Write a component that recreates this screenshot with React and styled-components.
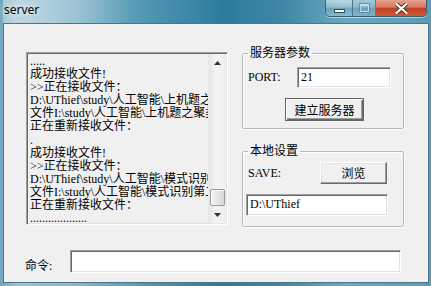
import React from "react";
import styled, { createGlobalStyle } from "styled-components";

const logLines = [
  ".....",
  "成功接收文件!",
  ">>正在接收文件：",
  "D:\\UThief\\study\\人工智能\\上机题之聚类分析.rar",
  "文件I:\\study\\人工智能\\上机题之聚类分析.rar",
  "正在重新接收文件：",
  ".",
  "成功接收文件!",
  ">>正在接收文件：",
  "D:\\UThief\\study\\人工智能\\模式识别第二次作业.doc",
  "文件I:\\study\\人工智能\\模式识别第二次作业.doc",
  "正在重新接收文件：",
  "...................",
];

export default function App() {
  return (
    <>
      <GlobalStyle />
      <Window>
        <TitleBar>
          <Title>server</Title>
          <Caption>
            <CapButton>
              <MinGlyph />
            </CapButton>
            <CapButton $disabled>
              <MaxGlyph />
            </CapButton>
            <CloseButton>
              <svg width="13" height="11" viewBox="0 0 13 11">
                <path
                  d="M1.5 1 L11.5 10 M11.5 1 L1.5 10"
                  stroke="#4a2a22"
                  strokeWidth="4"
                  strokeLinecap="square"
                />
                <path
                  d="M1.5 1 L11.5 10 M11.5 1 L1.5 10"
                  stroke="#ffffff"
                  strokeWidth="2.2"
                  strokeLinecap="square"
                />
              </svg>
            </CloseButton>
          </Caption>
        </TitleBar>

        <Client>
          <TopRow>
            <LogBox>
              <LogText>
                {logLines.map((line, i) => (
                  <LogLine key={i}>{line}</LogLine>
                ))}
              </LogText>
              <ScrollBar>
                <ArrowButton>
                  <svg width="7" height="4" viewBox="0 0 7 4">
                    <path d="M0 4 L3.5 0 L7 4 Z" fill="#333" />
                  </svg>
                </ArrowButton>
                <Track />
                <Thumb />
                <ArrowButton>
                  <svg width="7" height="4" viewBox="0 0 7 4">
                    <path d="M0 0 L7 0 L3.5 4 Z" fill="#333" />
                  </svg>
                </ArrowButton>
              </ScrollBar>
            </LogBox>

            <SideColumn>
              <Group>
                <Legend>服务器参数</Legend>
                <FieldRow $top={8}>
                  <Label $w={49}>PORT:</Label>
                  <TextBox $w={94} $h={21}>21</TextBox>
                </FieldRow>
                <FieldRow $top={10} $indent={37}>
                  <PushButton $w={79} $h={23} $default>
                    建立服务器
                  </PushButton>
                </FieldRow>
              </Group>

              <Group $gap={16} $bottom={10}>
                <Legend>本地设置</Legend>
                <FieldRow $top={5}>
                  <Label $w={72}>SAVE:</Label>
                  <PushButton $w={67} $h={22}>
                    浏览
                  </PushButton>
                </FieldRow>
                <FieldRow $top={10} $indent={-2}>
                  <TextBox $w={142} $h={22}>D:\UThief</TextBox>
                </FieldRow>
              </Group>
            </SideColumn>
          </TopRow>

          <CommandRow>
            <CmdLabel>命令:</CmdLabel>
            <TextBox $w={331} $h={23} />
          </CommandRow>
        </Client>
      </Window>
    </>
  );
}

const GlobalStyle = createGlobalStyle`
  html, body {
    margin: 0;
    padding: 0;
    background: #ffffff;
  }
  body {
    width: 431px;
    height: 286px;
    overflow: hidden;
  }
`;

const uiFont = `"Liberation Serif", "Noto Sans CJK SC", serif`;

const Window = styled.div`
  width: 431px;
  height: 286px;
  box-sizing: border-box;
  display: flex;
  flex-direction: column;
  padding: 0 2px 3px 3px;
  background: linear-gradient(
    90deg,
    #6fa6bf 0%,
    #9cc3d3 4%,
    #86b6ca 18%,
    #4f97b3 34%,
    #2c7b9b 52%,
    #3f88a6 66%,
    #6aa8c0 80%,
    #5c9bb6 100%
  );
`;

const TitleBar = styled.div`
  height: 23px;
  display: flex;
  justify-content: space-between;
  align-items: flex-start;
  background: linear-gradient(
    90deg,
    rgba(255, 255, 255, 0.35) 0%,
    rgba(255, 255, 255, 0.25) 12%,
    rgba(255, 255, 255, 0) 30%
  );
`;

const Title = styled.div`
  font-family: "Noto Sans", sans-serif;
  font-size: 12px;
  line-height: 20px;
  color: #000;
  padding-left: 1px;
  text-shadow: 0 0 6px rgba(255, 255, 255, 0.9), 0 0 10px rgba(255, 255, 255, 0.7);
`;

const Caption = styled.div`
  display: flex;
  margin-right: 2px;
  height: 16px;
  border: 1px solid #3c5f70;
  border-top: none;
  border-radius: 0 0 5px 5px;
  overflow: hidden;
  box-shadow: 0 1px 0 rgba(255, 255, 255, 0.5);
`;

const CapButton = styled.div`
  width: ${(p) => (p.$disabled ? 22 : 26)}px;
  display: flex;
  align-items: center;
  justify-content: center;
  border-right: 1px solid #4d7385;
  background: linear-gradient(
    180deg,
    rgba(255, 255, 255, 0.55) 0%,
    rgba(255, 255, 255, 0.3) 45%,
    rgba(120, 160, 180, 0.35) 50%,
    rgba(170, 205, 220, 0.5) 100%
  );
  opacity: ${(p) => (p.$disabled ? 0.7 : 1)};
`;

const MinGlyph = styled.div`
  width: 9px;
  height: 2px;
  margin-top: 6px;
  background: #fff;
  border: 1px solid #33505e;
`;

const MaxGlyph = styled.div`
  width: 7px;
  height: 5px;
  border: 1px solid rgba(255, 255, 255, 0.8);
  border-top-width: 2px;
  box-shadow: 0 0 0 1px rgba(60, 90, 105, 0.5);
`;

const CloseButton = styled.div`
  width: 50px;
  display: flex;
  align-items: center;
  justify-content: center;
  background: linear-gradient(
    180deg,
    #e6a391 0%,
    #d77a62 45%,
    #c2401f 52%,
    #d05a38 100%
  );
`;

const Client = styled.div`
  flex: 1;
  display: flex;
  flex-direction: column;
  padding: 23px 0 0 22px;
  background: #f0f0f0;
  border: 1px solid #4f7486;
  font-family: ${uiFont};
  font-size: 12px;
  color: #000;
`;

const TopRow = styled.div`
  display: flex;
  align-items: flex-start;
  gap: 14px;
`;

const LogBox = styled.div`
  margin-top: 5px;
  width: 202px;
  height: 173px;
  box-sizing: border-box;
  display: flex;
  border: 1px solid;
  border-color: #a0a0a0 #ffffff #ffffff #a0a0a0;
  box-shadow: inset 1px 1px 0 #696969, inset -1px -1px 0 #e3e3e3;
  background: #f0f0f0;
  padding: 1px;
`;

const LogText = styled.div`
  flex: 1;
  overflow: hidden;
  padding: 1px 0 0 2px;
  line-height: 13.1px;
`;

const LogLine = styled.div`
  white-space: pre;
  height: 13.1px;
`;

const ScrollBar = styled.div`
  width: 17px;
  display: flex;
  flex-direction: column;
  background: linear-gradient(90deg, #e6e6e6 0%, #f4f4f4 40%, #eeeeee 100%);
  border-left: 1px solid #e9e9e9;
`;

const ArrowButton = styled.div`
  height: 17px;
  display: flex;
  align-items: center;
  justify-content: center;
`;

const Track = styled.div`
  flex: 1;
`;

const Thumb = styled.div`
  height: 15px;
  margin: 0 1px;
  border: 1px solid #979797;
  border-radius: 2px;
  background: linear-gradient(90deg, #f2f2f2 0%, #e6e6e6 50%, #d8d8d8 100%);
  box-shadow: inset 1px 1px 0 #ffffff;
`;

const SideColumn = styled.div`
  width: 162px;
  display: flex;
  flex-direction: column;
`;

const Group = styled.fieldset`
  margin: ${(p) => p.$gap || 0}px 0 0 0;
  padding: 0 5px ${(p) => p.$bottom || 7}px 5px;
  border: 1px solid #b8b8b8;
  box-shadow: inset 1px 1px 0 #ffffff, 1px 1px 0 #ffffff;
  border-radius: 2px;
  min-width: 0;
`;

const Legend = styled.legend`
  padding: 0 2px;
  margin: 0;
  line-height: 12px;
  font-size: 12px;
`;

const FieldRow = styled.div`
  display: flex;
  align-items: center;
  margin-top: ${(p) => p.$top || 0}px;
  margin-left: ${(p) => p.$indent || 0}px;
`;

const Label = styled.div`
  width: ${(p) => p.$w}px;
  flex-shrink: 0;
`;

const TextBox = styled.div`
  width: ${(p) => p.$w}px;
  height: ${(p) => p.$h}px;
  box-sizing: border-box;
  background: #ffffff;
  border: 1px solid;
  border-color: #a0a0a0 #ffffff #ffffff #a0a0a0;
  box-shadow: inset 1px 1px 0 #696969, inset -1px -1px 0 #e3e3e3;
  padding: 2px 3px;
  line-height: 15px;
  white-space: pre;
`;

const PushButton = styled.div`
  width: ${(p) => p.$w}px;
  height: ${(p) => p.$h}px;
  box-sizing: border-box;
  display: flex;
  align-items: center;
  justify-content: center;
  background: #f0f0f0;
  border: 1px solid;
  border-color: ${(p) =>
    p.$default ? "#646464" : "#ffffff #696969 #696969 #ffffff"};
  box-shadow: ${(p) =>
    p.$default
      ? "inset 1px 1px 0 #ffffff, inset -1px -1px 0 #696969, inset -2px -2px 0 #a0a0a0"
      : "inset -1px -1px 0 #a0a0a0, inset 1px 1px 0 #e3e3e3"};
  font-size: 12px;
`;

const CommandRow = styled.div`
  display: flex;
  align-items: flex-end;
  margin-top: 23px;
`;

const CmdLabel = styled.div`
  width: 45px;
  margin-left: -1px;
  line-height: 13px;
`;
